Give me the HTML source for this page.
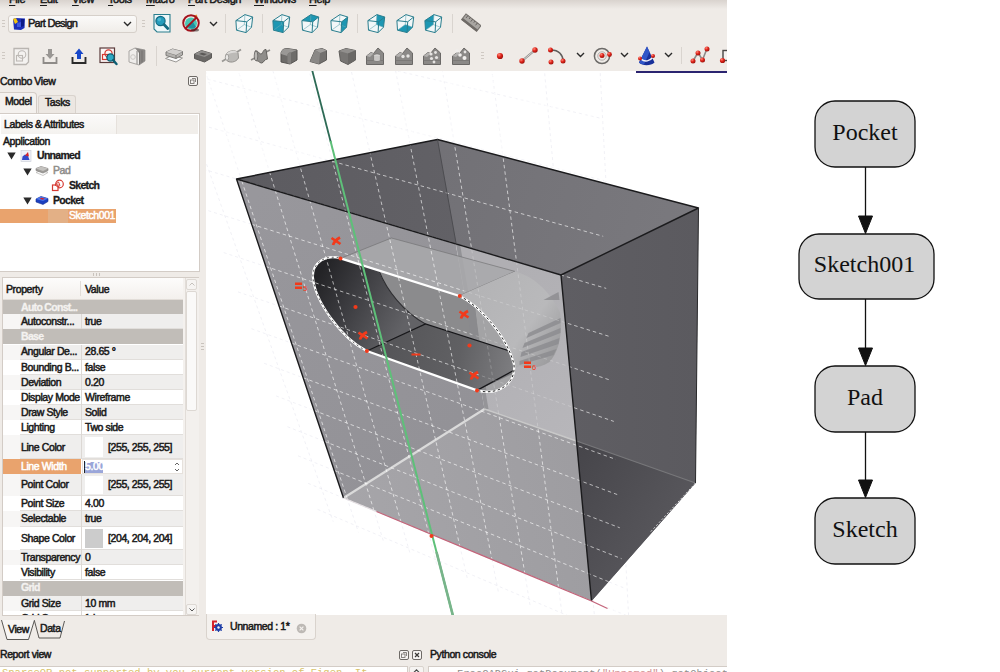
<!DOCTYPE html>
<html><head><meta charset="utf-8"><title>FreeCAD</title>
<style>
html,body{margin:0;padding:0;background:#fff;}
body{width:1000px;height:672px;position:relative;overflow:hidden;font-family:"Liberation Sans",sans-serif;font-size:10.5px;color:#1a1a1a;letter-spacing:-0.4px;-webkit-text-stroke:0.5px currentColor;}
.abs{position:absolute;}
#win{position:absolute;left:0;top:0;width:727px;height:672px;background:#efebe7;overflow:hidden;}
#topshade{position:absolute;left:0;top:0;width:727px;height:9px;background:linear-gradient(#d9d3ce,#efebe7);}
.menu span{position:absolute;top:-7.5px;font-size:11px;line-height:13px;white-space:nowrap;-webkit-text-stroke:0.5px currentColor}.menu u{text-decoration-thickness:1px;text-underline-offset:1.5px}
.t{position:absolute;white-space:nowrap;line-height:14px;height:14px;margin-top:-0.6px}
.b{font-weight:bold;-webkit-text-stroke:0.3px currentColor;letter-spacing:-0.7px;font-size:10.5px}
.sep{position:absolute;width:1px;background:#d9d4cf;}
.ico{position:absolute;}
</style></head><body>
<div id="win">
<div id="topshade"></div>
<div class="menu">
<span style="left:9px"><u>F</u>ile</span><span style="left:40px"><u>E</u>dit</span><span style="left:72px"><u>V</u>iew</span><span style="left:108px"><u>T</u>ools</span><span style="left:146px"><u>M</u>acro</span><span style="left:188px"><u>P</u>art Design</span><span style="left:254px"><u>W</u>indows</span><span style="left:309px"><u>H</u>elp</span>
</div>
<div class="abs" style="left:2px;top:20px;width:3px;height:7px;background:repeating-linear-gradient(#cfc9c3 0 1px,transparent 1px 3px)"></div>
<div class="abs" style="left:142px;top:20px;width:3px;height:7px;background:repeating-linear-gradient(#cfc9c3 0 1px,transparent 1px 3px)"></div>
<div class="abs" style="left:2px;top:52px;width:3px;height:7px;background:repeating-linear-gradient(#cfc9c3 0 1px,transparent 1px 3px)"></div>
<div class="abs" style="left:481px;top:52px;width:3px;height:7px;background:repeating-linear-gradient(#cfc9c3 0 1px,transparent 1px 3px)"></div>
<div class="abs" style="left:8px;top:15px;width:127px;height:16px;border:1px solid #d6d0ca;border-radius:3px;background:linear-gradient(#fbfaf9,#f0ede9)"></div>
<svg class="ico" style="left:12px;top:17px" width="14" height="14" viewBox="0 0 14 14"><path d="M1 2 L4 1 L13 1.5 L12.5 11 L9 13 L2 12.5 Z" fill="#1c2fb8"/><path d="M1 2 L4 1 L6 5 L3 7 Z" fill="#f1c40f"/><path d="M5 6 L9 5 L9 10 L5 10Z" fill="#3f57e0"/><path d="M9 2 L12 2 L12 9 L9 10 Z" fill="#0c1a86"/></svg>
<div class="t" style="left:28px;top:17px;font-size:11px;letter-spacing:-0.75px">Part Design</div>
<svg class="ico" style="left:123px;top:21px" width="9" height="6" viewBox="0 0 9 6"><path d="M1 1 L4.5 4.5 L8 1" fill="none" stroke="#2a2a2a" stroke-width="1.4"/></svg>
<svg class="ico" style="left:152px;top:13px" width="20" height="20" viewBox="0 0 20 20"><path d="M2 1.5 H18 V19 H5 L2 16 Z" fill="#eef7f9" stroke="#2a7e8e" stroke-width="1.1"/><circle cx="8.5" cy="8" r="4.6" fill="#259cbc" stroke="#136a82" stroke-width="1.2"/><circle cx="7.3" cy="6.6" r="1.8" fill="#5cc3da" opacity=".7"/><path d="M12 11.5 L15.8 15.5" stroke="#136a82" stroke-width="2.8" stroke-linecap="round"/></svg>
<svg class="ico" style="left:181px;top:13px" width="20" height="20" viewBox="0 0 20 20"><circle cx="10" cy="10.5" r="6" fill="#49c6b4"/><path d="M6 13 A6 6 0 0 0 15 14 L12 9 Z" fill="#1f8fa0"/><path d="M13 4 l3 -1.5" stroke="#e08a2a" stroke-width="2"/><circle cx="10" cy="10" r="7.8" fill="none" stroke="#a3121c" stroke-width="1.9"/><path d="M4.6 15.4 L15.4 4.6" stroke="#a3121c" stroke-width="1.9"/><ellipse cx="14" cy="17" rx="4" ry="1.5" fill="#3a2a2a" opacity=".6"/></svg>
<svg class="ico" style="left:209px;top:21px" width="9" height="6" viewBox="0 0 9 6"><path d="M1 1 L4.5 4.5 L8 1" fill="none" stroke="#2a2a2a" stroke-width="1.4"/></svg>
<div class="sep" style="left:225px;top:14px;height:19px"></div>
<svg class="ico" style="left:234.5px;top:14px" width="19" height="20" viewBox="0 0 19 20"><polygon points="0.9,6.6 9.9,0.6 17.7,3 16.5,13.2 11.1,18.6 1.5,16.2" fill="#f2f7f8"/><g fill="none" stroke="#2a7e8e" stroke-linejoin="round"><path d="M9.3 10.6 L9.9 0.6 M9.3 10.6 L1.5 16.2 M9.3 10.6 L16.5 13.2" stroke-width=".6" stroke="#6aa9b3"/><polygon points="0.9,6.6 9.9,0.6 17.7,3 16.5,13.2 11.1,18.6 1.5,16.2" stroke-width="1"/><path d="M0.9 6.6 L11.7 7.8 L17.7 3 M11.7 7.8 L11.1 18.6" stroke-width="1"/></g></svg>
<svg class="ico" style="left:272px;top:14px" width="19" height="20" viewBox="0 0 19 20"><polygon points="0.9,6.6 9.9,0.6 17.7,3 16.5,13.2 11.1,18.6 1.5,16.2" fill="#f2f7f8"/><polygon points="0.9,6.6 11.7,7.8 11.1,18.6 1.5,16.2" fill="#1d97b3"/><g fill="none" stroke="#2a7e8e" stroke-linejoin="round"><path d="M9.3 10.6 L9.9 0.6 M9.3 10.6 L1.5 16.2 M9.3 10.6 L16.5 13.2" stroke-width=".6" stroke="#6aa9b3"/><polygon points="0.9,6.6 9.9,0.6 17.7,3 16.5,13.2 11.1,18.6 1.5,16.2" stroke-width="1"/><path d="M0.9 6.6 L11.7 7.8 L17.7 3 M11.7 7.8 L11.1 18.6" stroke-width="1"/></g></svg>
<svg class="ico" style="left:300.5px;top:14px" width="19" height="20" viewBox="0 0 19 20"><polygon points="0.9,6.6 9.9,0.6 17.7,3 16.5,13.2 11.1,18.6 1.5,16.2" fill="#f2f7f8"/><polygon points="0.9,6.6 9.9,0.6 17.7,3 11.7,7.8" fill="#1d97b3"/><g fill="none" stroke="#2a7e8e" stroke-linejoin="round"><path d="M9.3 10.6 L9.9 0.6 M9.3 10.6 L1.5 16.2 M9.3 10.6 L16.5 13.2" stroke-width=".6" stroke="#6aa9b3"/><polygon points="0.9,6.6 9.9,0.6 17.7,3 16.5,13.2 11.1,18.6 1.5,16.2" stroke-width="1"/><path d="M0.9 6.6 L11.7 7.8 L17.7 3 M11.7 7.8 L11.1 18.6" stroke-width="1"/></g></svg>
<svg class="ico" style="left:329.5px;top:14px" width="19" height="20" viewBox="0 0 19 20"><polygon points="0.9,6.6 9.9,0.6 17.7,3 16.5,13.2 11.1,18.6 1.5,16.2" fill="#f2f7f8"/><polygon points="11.7,7.8 17.7,3 16.5,13.2 11.1,18.6" fill="#1d97b3"/><g fill="none" stroke="#2a7e8e" stroke-linejoin="round"><path d="M9.3 10.6 L9.9 0.6 M9.3 10.6 L1.5 16.2 M9.3 10.6 L16.5 13.2" stroke-width=".6" stroke="#6aa9b3"/><polygon points="0.9,6.6 9.9,0.6 17.7,3 16.5,13.2 11.1,18.6 1.5,16.2" stroke-width="1"/><path d="M0.9 6.6 L11.7 7.8 L17.7 3 M11.7 7.8 L11.1 18.6" stroke-width="1"/></g></svg>
<svg class="ico" style="left:366.5px;top:14px" width="19" height="20" viewBox="0 0 19 20"><polygon points="0.9,6.6 9.9,0.6 17.7,3 16.5,13.2 11.1,18.6 1.5,16.2" fill="#f2f7f8"/><polygon points="9.9,0.6 17.7,3 16.5,13.2 9.3,10.6" fill="#1d97b3"/><g fill="none" stroke="#2a7e8e" stroke-linejoin="round"><path d="M9.3 10.6 L9.9 0.6 M9.3 10.6 L1.5 16.2 M9.3 10.6 L16.5 13.2" stroke-width=".6" stroke="#6aa9b3"/><polygon points="0.9,6.6 9.9,0.6 17.7,3 16.5,13.2 11.1,18.6 1.5,16.2" stroke-width="1"/><path d="M0.9 6.6 L11.7 7.8 L17.7 3 M11.7 7.8 L11.1 18.6" stroke-width="1"/></g></svg>
<svg class="ico" style="left:395.5px;top:14px" width="19" height="20" viewBox="0 0 19 20"><polygon points="0.9,6.6 9.9,0.6 17.7,3 16.5,13.2 11.1,18.6 1.5,16.2" fill="#f2f7f8"/><polygon points="1.5,16.2 9.3,10.6 16.5,13.2 11.1,18.6" fill="#1d97b3"/><g fill="none" stroke="#2a7e8e" stroke-linejoin="round"><path d="M9.3 10.6 L9.9 0.6 M9.3 10.6 L1.5 16.2 M9.3 10.6 L16.5 13.2" stroke-width=".6" stroke="#6aa9b3"/><polygon points="0.9,6.6 9.9,0.6 17.7,3 16.5,13.2 11.1,18.6 1.5,16.2" stroke-width="1"/><path d="M0.9 6.6 L11.7 7.8 L17.7 3 M11.7 7.8 L11.1 18.6" stroke-width="1"/></g></svg>
<svg class="ico" style="left:424px;top:14px" width="19" height="20" viewBox="0 0 19 20"><polygon points="0.9,6.6 9.9,0.6 17.7,3 16.5,13.2 11.1,18.6 1.5,16.2" fill="#f2f7f8"/><polygon points="0.9,6.6 9.9,0.6 9.3,10.6 1.5,16.2" fill="#1d97b3"/><g fill="none" stroke="#2a7e8e" stroke-linejoin="round"><path d="M9.3 10.6 L9.9 0.6 M9.3 10.6 L1.5 16.2 M9.3 10.6 L16.5 13.2" stroke-width=".6" stroke="#6aa9b3"/><polygon points="0.9,6.6 9.9,0.6 17.7,3 16.5,13.2 11.1,18.6 1.5,16.2" stroke-width="1"/><path d="M0.9 6.6 L11.7 7.8 L17.7 3 M11.7 7.8 L11.1 18.6" stroke-width="1"/></g></svg>
<div class="sep" style="left:262px;top:14px;height:19px"></div>
<div class="sep" style="left:357px;top:14px;height:19px"></div>
<div class="sep" style="left:452px;top:14px;height:19px"></div>
<svg class="ico" style="left:461px;top:13px" width="20" height="20" viewBox="0 0 20 20"><g transform="rotate(38 10 10)"><rect x="0.5" y="6" width="19" height="7" fill="#a9a6a2" stroke="#77736f" stroke-width="1"/><rect x="0.5" y="11" width="19" height="2.4" fill="#6e6a66"/><path d="M3 6v3M6 6v2M9 6v3M12 6v2M15 6v3" stroke="#5a5652" stroke-width=".8"/></g></svg>
<div class="abs" style="left:0;top:1px">
<svg class="ico" style="left:11px;top:45px" width="20" height="20" viewBox="0 0 20 20"><path d="M3 2.5 H17.5 V16 L15 18.5 H3 Z" fill="#f4f2f0" stroke="#b9b5b1" stroke-width="1.3"/><circle cx="11" cy="8.5" r="3.8" fill="none" stroke="#bdb9b5" stroke-width="1.1"/><rect x="5.5" y="9.5" width="6" height="5.5" fill="none" stroke="#bdb9b5" stroke-width="1.1"/></svg>
<svg class="ico" style="left:40px;top:45px" width="20" height="20" viewBox="0 0 20 20"><path d="M3.5 11 V17 H16.5 V11" fill="none" stroke="#8e8b88" stroke-width="1.8"/><path d="M8 3 H12 V8 H14.5 L10 13 L5.5 8 H8 Z" fill="#9a9794"/></svg>
<svg class="ico" style="left:69px;top:45px" width="20" height="20" viewBox="0 0 20 20"><path d="M3.5 11 V17 H16.5 V11" fill="none" stroke="#2b2b2b" stroke-width="1.9"/><path d="M8 13 H12 V8 H14.5 L10 2.5 L5.5 8 H8 Z" fill="#1747c9"/></svg>
<svg class="ico" style="left:98px;top:45px" width="21" height="21" viewBox="0 0 21 21"><rect x="2" y="2" width="14.5" height="14.5" fill="#fbf6f5" stroke="#5a3a3a" stroke-width="1.2"/><circle cx="10.5" cy="7.5" r="3.6" fill="none" stroke="#d63a32" stroke-width="1.2"/><rect x="4.5" y="8.5" width="5" height="5" fill="none" stroke="#d63a32" stroke-width="1.2"/><circle cx="12.5" cy="11.5" r="3.6" fill="#2fa9c4" stroke="#0c5e73" stroke-width="1.3"/><path d="M15.2 14.2 L18.5 18" stroke="#0c5e73" stroke-width="2.4" stroke-linecap="round"/></svg>
<svg class="ico" style="left:126px;top:45px" width="21" height="21" viewBox="0 0 21 21"><path d="M3 5 L9 2 L19 4 V15 L13 19 L3 16 Z" fill="#efedeb" stroke="#a8a5a2" stroke-width="1"/><path d="M9 2 L19 4 V15 L13 19 V7 Z" fill="#8a8785"/><path d="M11 5 v13 M13.5 5.5 v13 M16 4.5 v12" stroke="#6f6d6b" stroke-width=".8"/><circle cx="7" cy="11" r="2.3" fill="none" stroke="#c9c6c3"/></svg>
<div class="sep" style="left:156px;top:45px;height:20px"></div>
<svg class="ico" style="left:164px;top:45px" width="20" height="20" viewBox="0 0 20 20"><path d="M1.5 12.5 L8 9.5 L18.5 12 L12 16 Z" fill="#fafafa" stroke="#9a9895" stroke-width="1"/><path d="M2 6 L8.5 3 L18.5 5.5 V9 L12 12.5 L2 9.5 Z" fill="#b4b2af" stroke="#7d7b78" stroke-width="1"/><path d="M2 6 L12 9 L18.5 5.5 M12 9 V12.5" fill="none" stroke="#7d7b78" stroke-width="1"/><path d="M2 6 L8.5 3 L18.5 5.5 L12 9 Z" fill="#d2d0ce"/></svg>
<svg class="ico" style="left:193px;top:46px" width="20" height="18" viewBox="0 0 20 18"><path d="M1.5 7 L8.5 3.5 L18.5 6.5 V11 L11.5 15 L1.5 11.5 Z" fill="#6a6866" stroke="#5b5957" stroke-width="1"/><path d="M1.5 7 L8.5 3.5 L18.5 6.5 L11.5 10 Z" fill="#8f8d8b"/><path d="M6 7 L9 5.7 L14 7 L11 8.5 Z" fill="#5b5957"/></svg>
<svg class="ico" style="left:221px;top:45px" width="21" height="20" viewBox="0 0 21 20"><path d="M1 15.5 L20 3.5" stroke="#9a9895" stroke-width="1.8"/><path d="M5 8.5 C7 4.5 14 3.5 17 6.5 L17.5 12 C15 16.5 8 17.5 5.5 14 Z" fill="#bcbab7" stroke="#8b8986" stroke-width=".9"/><path d="M5 8.5 C7 4.5 14 3.5 17 6.5 C13 6 8 7.5 5 8.5Z" fill="#dcdad8"/><ellipse cx="6" cy="11.3" rx="1.7" ry="3" fill="#e9e7e5" stroke="#8b8986" stroke-width=".7"/></svg>
<svg class="ico" style="left:250px;top:45px" width="21" height="21" viewBox="0 0 21 21"><path d="M1 14 L20 4" stroke="#8b8986" stroke-width="1.6"/><path d="M5 5 C8 4 9 8 11 8 C13 8 13 3 16 3.5 L17.5 13 C14 13 14 17 11.5 17 C9 17 9 14 6.5 15 Z" fill="#8f8d8a" stroke="#64625f" stroke-width="1"/><ellipse cx="6" cy="10" rx="1.8" ry="4.8" fill="#b9b7b4" stroke="#64625f" stroke-width=".8"/></svg>
<svg class="ico" style="left:279px;top:45px" width="20" height="20" viewBox="0 0 20 20"><path d="M2 8 C2 4 5 2.5 8 2.5 L18 4 V14 L11 18 L2 16 Z" fill="#6e6c6a" stroke="#555351" stroke-width="1"/><path d="M2 8 C2 4 5 2.5 8 2.5 L18 4 L12 6.5 C9 6.5 8.5 8 8.5 10 Z" fill="#9a9896"/><path d="M8.5 10 C8.5 8 9 6.5 12 6.5 V18 L8.5 17.2 Z" fill="#82807e"/></svg>
<svg class="ico" style="left:308px;top:45px" width="20" height="20" viewBox="0 0 20 20"><path d="M2 15.5 L7 4 L14 2.5 L18.5 4.5 V14 L11 18 Z" fill="#73716f" stroke="#5c5a58" stroke-width="1"/><path d="M7 4 L14 2.5 L18.5 4.5 L12 7 Z" fill="#a09e9c"/><path d="M2 15.5 L7 4 L12 7 L11 18 Z" fill="#8a8886"/></svg>
<svg class="ico" style="left:337px;top:45px" width="20" height="20" viewBox="0 0 20 20"><path d="M2 5 L9 2.5 L18.5 4.5 V14 L11 18.5 L3.5 15 Z" fill="#777573" stroke="#5f5d5b" stroke-width="1"/><path d="M2 5 L9 2.5 L18.5 4.5 L11 7.5 Z" fill="#918f8d"/><path d="M11 7.5 L18.5 4.5 V14 L11 18.5 Z" fill="#6a6866"/></svg>
<svg class="ico" style="left:364.5px;top:45px" width="20" height="20" viewBox="0 0 20 20"><path d="M1.5 18.5 V10 L6 6.5 L8.5 7.5 L13 2 L18.5 7 V18.5 Z" fill="#8b8987" stroke="#6a6866" stroke-width="1"/><path d="M1.5 10 L6 6.5 L8.5 7.5 L5 11 Z" fill="#b3b1af"/><path d="M1.5 14.5 H18.5" stroke="#777573" stroke-width=".8"/><ellipse cx="12" cy="9.5" rx="3.4" ry="1.6" fill="#dedcda" stroke="#6a6866" stroke-width=".6"/><path d="M8.6 9.5 V14 A3.4 1.6 0 0 0 15.4 14 V9.5" fill="#c9c7c5" stroke="#6a6866" stroke-width=".6"/></svg>
<svg class="ico" style="left:393.5px;top:45px" width="20" height="20" viewBox="0 0 20 20"><path d="M1.5 18.5 V10 L6 6.5 L8.5 7.5 L13 2 L18.5 7 V18.5 Z" fill="#8b8987" stroke="#6a6866" stroke-width="1"/><path d="M1.5 10 L6 6.5 L8.5 7.5 L5 11 Z" fill="#b3b1af"/><path d="M1.5 14.5 H18.5" stroke="#777573" stroke-width=".8"/><circle cx="9" cy="10.5" r="1.7" fill="#e6e4e2"/><circle cx="14" cy="10" r="1.7" fill="#e6e4e2"/></svg>
<svg class="ico" style="left:422px;top:45px" width="20" height="20" viewBox="0 0 20 20"><path d="M1.5 18.5 V10 L6 6.5 L8.5 7.5 L13 2 L18.5 7 V18.5 Z" fill="#8b8987" stroke="#6a6866" stroke-width="1"/><path d="M1.5 10 L6 6.5 L8.5 7.5 L5 11 Z" fill="#b3b1af"/><path d="M1.5 14.5 H18.5" stroke="#777573" stroke-width=".8"/><circle cx="9" cy="8" r="1.6" fill="#e6e4e2"/><circle cx="13.5" cy="6.5" r="1.4" fill="#e6e4e2"/><circle cx="9.5" cy="12.5" r="1.6" fill="#e6e4e2"/><circle cx="14.5" cy="11.5" r="1.6" fill="#e6e4e2"/><circle cx="12" cy="16" r="1.4" fill="#e6e4e2"/></svg>
<svg class="ico" style="left:451px;top:45px" width="20" height="20" viewBox="0 0 20 20"><path d="M1.5 18.5 V10 L6 6.5 L8.5 7.5 L13 2 L18.5 7 V18.5 Z" fill="#8b8987" stroke="#6a6866" stroke-width="1"/><path d="M1.5 10 L6 6.5 L8.5 7.5 L5 11 Z" fill="#b3b1af"/><path d="M1.5 14.5 H18.5" stroke="#777573" stroke-width=".8"/><circle cx="6" cy="5" r="1.8" fill="#f0eeec"/><circle cx="9" cy="9" r="1.8" fill="#f0eeec"/><circle cx="13.5" cy="12" r="2" fill="#f0eeec"/><circle cx="14" cy="6" r="1.4" fill="#e6e4e2"/></svg>
</div>
<svg width="0" height="0" style="position:absolute"><defs><radialGradient id="rb" cx=".35" cy=".3" r=".8"><stop offset="0" stop-color="#ff8a7a"/><stop offset=".45" stop-color="#e0241b"/><stop offset="1" stop-color="#8c0d08"/></radialGradient></defs></svg>
<svg class="ico" style="left:495px;top:51px" width="10" height="10" viewBox="0 0 10 10"><circle cx="5" cy="5" r="3.1" fill="url(#rb)"/></svg>
<svg class="ico" style="left:518px;top:46px" width="21" height="19" viewBox="0 0 21 19"><path d="M4 15 L17 4" stroke="#8c8a88" stroke-width="2.2"/><path d="M4 15 L17 4" stroke="#e8e6e4" stroke-width=".8"/><circle cx="4" cy="15" r="2.7" fill="url(#rb)"/><circle cx="17" cy="4" r="2.7" fill="url(#rb)"/></svg>
<svg class="ico" style="left:546px;top:46px" width="22" height="19" viewBox="0 0 22 19"><path d="M5 4 C13 4 17 9 17 15" fill="none" stroke="#5f5d5b" stroke-width="1.6"/><circle cx="4.5" cy="4" r="2.5" fill="url(#rb)"/><circle cx="17" cy="15" r="2.5" fill="url(#rb)"/><circle cx="5" cy="16" r="2.5" fill="url(#rb)"/></svg>
<svg class="ico" style="left:576px;top:52px" width="9" height="6" viewBox="0 0 9 6"><path d="M1 1 L4.5 4.5 L8 1" fill="none" stroke="#2a2a2a" stroke-width="1.4"/></svg>
<svg class="ico" style="left:592px;top:46px" width="21" height="20" viewBox="0 0 21 20"><circle cx="10" cy="10" r="7.6" fill="none" stroke="#6c6a68" stroke-width="1.5"/><circle cx="10" cy="10" r="4.2" fill="none" stroke="#b0aeac" stroke-width="1"/><circle cx="10" cy="9.5" r="2.5" fill="url(#rb)"/><circle cx="17.5" cy="8.5" r="2.4" fill="url(#rb)"/></svg>
<svg class="ico" style="left:620px;top:52px" width="9" height="6" viewBox="0 0 9 6"><path d="M1 1 L4.5 4.5 L8 1" fill="none" stroke="#2a2a2a" stroke-width="1.4"/></svg>
<svg class="ico" style="left:636px;top:45px" width="22" height="22" viewBox="0 0 22 22"><path d="M11 1.5 L18.5 17.5 C15 21 6 21 3 17.5 Z" fill="#18309a"/><path d="M11 1.5 L13.5 7 L8 19.5 C6 19 4 18.5 3 17.5 Z" fill="#2f55c8"/><path d="M5 14 C9 17.5 14 16 16.5 12.5" fill="none" stroke="#f2f2f8" stroke-width="1.5"/><circle cx="4" cy="13.5" r="2" fill="url(#rb)"/><circle cx="17" cy="11" r="2" fill="url(#rb)"/></svg>
<svg class="ico" style="left:664px;top:52px" width="9" height="6" viewBox="0 0 9 6"><path d="M1 1 L4.5 4.5 L8 1" fill="none" stroke="#2a2a2a" stroke-width="1.4"/></svg>
<div class="sep" style="left:681px;top:47px;height:17px"></div>
<svg class="ico" style="left:689px;top:45px" width="22" height="20" viewBox="0 0 22 20"><path d="M4 16 L9 7.5 L13.5 15 L18 3.5" fill="none" stroke="#8c8a88" stroke-width="1.6"/><circle cx="4" cy="16" r="2.5" fill="url(#rb)"/><circle cx="9" cy="8" r="2.5" fill="url(#rb)"/><circle cx="13.5" cy="15" r="2.5" fill="url(#rb)"/><circle cx="18" cy="4" r="2.5" fill="url(#rb)"/></svg>
<svg class="ico" style="left:718px;top:45px" width="9" height="20" viewBox="0 0 9 20"><rect x="5" y="5.5" width="9" height="10" fill="#f4f2f0" stroke="#4a4846" stroke-width="1.4"/><circle cx="4.5" cy="15.5" r="2.6" fill="url(#rb)"/></svg>
<div class="t" style="left:0px;top:74.8px">Combo View</div>
<svg class="ico" style="left:188px;top:76px" width="10" height="10" viewBox="0 0 10 10"><rect x=".5" y=".5" width="9" height="9" rx="1.5" fill="#f6f4f2" stroke="#6e6a66"/><rect x="2.5" y="4" width="3.5" height="3.5" fill="none" stroke="#6e6a66" stroke-width=".8"/><path d="M4 2.5 H7.5 V6" fill="none" stroke="#6e6a66" stroke-width=".8"/></svg>
<div class="abs" style="left:38px;top:95px;width:36px;height:18px;border:1px solid #d9d3cd;border-bottom:none;border-radius:3px 3px 0 0;background:#ece7e2"></div>
<div class="abs" style="left:0px;top:92px;width:36px;height:22px;border:1px solid #d3ccc6;border-left:none;border-bottom:none;border-radius:0 4px 0 0;background:#f4f1ee"></div>
<div class="t" style="left:5px;top:95px">Model</div>
<div class="t" style="left:45px;top:96px">Tasks</div>
<div class="abs" style="left:0;top:113px;width:199.5px;height:159px;border:1px solid #d3ccc6;border-left:none;background:#fff;box-sizing:border-box"></div>
<div class="abs" style="left:1px;top:115px;width:197px;height:19px;background:#f1eeea"></div>
<div class="abs" style="left:1px;top:115px;width:116px;height:19px;background:linear-gradient(#fbfaf9,#f4f2ef);border-right:1px solid #e6e1dc;box-sizing:border-box"></div>
<div class="t" style="left:4px;top:118px">Labels &amp; Attributes</div>
<div class="t" style="left:3px;top:134.5px">Application</div>
<svg class="ico" style="left:7px;top:152px" width="9" height="8" viewBox="0 0 9 8"><path d="M0.3 0.5 H8.7 L4.5 7.6 Z" fill="#2b2b2b"/></svg>
<svg class="ico" style="left:23px;top:167.5px" width="9" height="8" viewBox="0 0 9 8"><path d="M0.3 0.5 H8.7 L4.5 7.6 Z" fill="#2b2b2b"/></svg>
<svg class="ico" style="left:23px;top:197px" width="9" height="8" viewBox="0 0 9 8"><path d="M0.3 0.5 H8.7 L4.5 7.6 Z" fill="#2b2b2b"/></svg>
<svg class="ico" style="left:20px;top:150px" width="12" height="12" viewBox="0 0 12 12"><rect x="1" y=".5" width="10" height="11" fill="#eef0f8" stroke="#c9cbd6" stroke-width=".6"/><path d="M2 10 L2.5 6.5 L5 4.5 L8 6 L9.5 10 Z" fill="#3348c9"/><path d="M5 5.5 L8 2 L9 6.5 Z" fill="#d4222a"/></svg>
<svg class="ico" style="left:35px;top:165px" width="14" height="12" viewBox="0 0 14 12"><path d="M1 7.5 L6 5.5 L13 7.5 L8 10.5 Z" fill="#fafafa" stroke="#b5b3b0" stroke-width=".7"/><path d="M1 3.5 L6 1.5 L13 3.5 V5.5 L8 8 L1 5.5 Z" fill="#9d9b98" stroke="#858380" stroke-width=".7"/><path d="M1 3.5 L6 1.5 L13 3.5 L8 6 Z" fill="#c4c2bf"/></svg>
<svg class="ico" style="left:51px;top:179px" width="14" height="13" viewBox="0 0 14 13"><circle cx="8.5" cy="5" r="3.8" fill="#fff" stroke="#d63a32" stroke-width="1.2"/><rect x="1.5" y="6" width="5.5" height="5.5" fill="#fff" stroke="#d63a32" stroke-width="1.2"/><path d="M4 6 L7.5 3 L9 6.5 L7 8 Z" fill="none" stroke="#d63a32" stroke-width="1"/></svg>
<svg class="ico" style="left:35px;top:194px" width="14" height="12" viewBox="0 0 14 12"><path d="M1 5 L6 2.5 L13 4.5 V7.5 L8 10.5 L1 8 Z" fill="#1b3fbf" stroke="#16308f" stroke-width=".6"/><path d="M1 5 L6 2.5 L13 4.5 L8 7 Z" fill="#4a74ea"/><path d="M4.5 4.8 L6.8 3.8 L10 4.7 L7.7 5.8 Z" fill="#d4222a"/></svg>
<div class="t b" style="left:37px;top:149px">Unnamed</div>
<div class="t" style="left:53px;top:164px;color:#8f8d8a">Pad</div>
<div class="t b" style="left:69px;top:178.5px">Sketch</div>
<div class="t b" style="left:53px;top:193.5px">Pocket</div>
<div class="abs" style="left:0;top:208.5px;width:116px;height:14px;background:#e9a36d"></div>
<div class="abs" style="left:48px;top:208.5px;width:20px;height:14px;background:#e3b086"></div>
<div class="t" style="left:69px;top:208.5px;color:#fff">Sketch001</div>
<div class="abs" style="left:93px;top:273px;width:9px;height:3px;background:repeating-linear-gradient(90deg,#c9c3bd 0 1px,transparent 1px 3px)"></div>
<div class="abs" style="left:2px;top:277px;width:196.5px;height:339px;border:1px solid #d3ccc6;background:#f4f1ee;box-sizing:border-box"></div>
<div class="abs" style="left:3px;top:277.5px;width:180px;height:337.5px;background:#fff;overflow:hidden" id="prop">
<div class="abs" style="left:0;top:0;width:180px;height:22px;background:linear-gradient(#fdfcfb,#f3f0ed);border-bottom:1px solid #e2ddd8;box-sizing:border-box"></div>
<div class="abs" style="left:77px;top:3px;width:1px;height:15px;background:#e2ddd8"></div>
<div class="t" style="left:3px;top:5px">Property</div><div class="t" style="left:82px;top:5px">Value</div>
<div class="abs" style="left:0;top:22.5px;width:180px;height:14.2px;background:#c1bdb8"></div>
<div class="t b" style="left:18px;top:22.6px;color:#f4f2f0">Auto  Const...</div>
<div class="abs" style="left:0;top:36.7px;width:180px;height:15.15px;background:#efeeed;border-bottom:1px solid #e1dedb;box-sizing:border-box"></div>
<div class="abs" style="left:0;top:36.7px;width:17px;height:15.15px;background:#f7f6f5"></div>
<div class="abs" style="left:78px;top:36.7px;width:1px;height:15.15px;background:#dcd8d4"></div>
<div class="t" style="left:18px;top:37.275000000000006px">Autoconstr...</div>
<div class="t" style="left:82px;top:37.275000000000006px">true</div>
<div class="abs" style="left:0;top:51.85px;width:180px;height:15.15px;background:#c1bdb8"></div>
<div class="t b" style="left:18px;top:52.425000000000004px;color:#f4f2f0">Base</div>
<div class="abs" style="left:0;top:67.0px;width:180px;height:15.15px;background:#efeeed;border-bottom:1px solid #e1dedb;box-sizing:border-box"></div>
<div class="abs" style="left:0;top:67.0px;width:17px;height:15.15px;background:#f7f6f5"></div>
<div class="abs" style="left:78px;top:67.0px;width:1px;height:15.15px;background:#dcd8d4"></div>
<div class="t" style="left:18px;top:67.575px">Angular De...</div>
<div class="t" style="left:82px;top:67.575px">28.65 °</div>
<div class="abs" style="left:0;top:82.15px;width:180px;height:15.15px;background:#ffffff;border-bottom:1px solid #e1dedb;box-sizing:border-box"></div>
<div class="abs" style="left:0;top:82.15px;width:17px;height:15.15px;background:#ffffff"></div>
<div class="abs" style="left:78px;top:82.15px;width:1px;height:15.15px;background:#dcd8d4"></div>
<div class="t" style="left:18px;top:82.72500000000001px">Bounding B...</div>
<div class="t" style="left:82px;top:82.72500000000001px">false</div>
<div class="abs" style="left:0;top:97.30000000000001px;width:180px;height:15.15px;background:#efeeed;border-bottom:1px solid #e1dedb;box-sizing:border-box"></div>
<div class="abs" style="left:0;top:97.30000000000001px;width:17px;height:15.15px;background:#f7f6f5"></div>
<div class="abs" style="left:78px;top:97.30000000000001px;width:1px;height:15.15px;background:#dcd8d4"></div>
<div class="t" style="left:18px;top:97.87500000000001px">Deviation</div>
<div class="t" style="left:82px;top:97.87500000000001px">0.20</div>
<div class="abs" style="left:0;top:112.45000000000002px;width:180px;height:15.15px;background:#ffffff;border-bottom:1px solid #e1dedb;box-sizing:border-box"></div>
<div class="abs" style="left:0;top:112.45000000000002px;width:17px;height:15.15px;background:#ffffff"></div>
<div class="abs" style="left:78px;top:112.45000000000002px;width:1px;height:15.15px;background:#dcd8d4"></div>
<div class="t" style="left:18px;top:113.02500000000002px">Display Mode</div>
<div class="t" style="left:82px;top:113.02500000000002px">Wireframe</div>
<div class="abs" style="left:0;top:127.60000000000002px;width:180px;height:15.15px;background:#efeeed;border-bottom:1px solid #e1dedb;box-sizing:border-box"></div>
<div class="abs" style="left:0;top:127.60000000000002px;width:17px;height:15.15px;background:#f7f6f5"></div>
<div class="abs" style="left:78px;top:127.60000000000002px;width:1px;height:15.15px;background:#dcd8d4"></div>
<div class="t" style="left:18px;top:128.175px">Draw Style</div>
<div class="t" style="left:82px;top:128.175px">Solid</div>
<div class="abs" style="left:0;top:142.75000000000003px;width:180px;height:15.15px;background:#ffffff;border-bottom:1px solid #e1dedb;box-sizing:border-box"></div>
<div class="abs" style="left:0;top:142.75000000000003px;width:17px;height:15.15px;background:#ffffff"></div>
<div class="abs" style="left:78px;top:142.75000000000003px;width:1px;height:15.15px;background:#dcd8d4"></div>
<div class="t" style="left:18px;top:143.32500000000002px">Lighting</div>
<div class="t" style="left:82px;top:143.32500000000002px">Two side</div>
<div class="abs" style="left:0;top:157.90000000000003px;width:180px;height:23.6px;background:#efeeed;border-bottom:1px solid #e1dedb;box-sizing:border-box"></div>
<div class="abs" style="left:0;top:157.90000000000003px;width:17px;height:23.6px;background:#f7f6f5"></div>
<div class="abs" style="left:78px;top:157.90000000000003px;width:1px;height:23.6px;background:#dcd8d4"></div>
<div class="t" style="left:18px;top:162.70000000000005px">Line Color</div>
<div class="abs" style="left:82px;top:159.90000000000003px;width:18px;height:19.6px;background:#ffffff"></div>
<div class="t" style="left:105px;top:162.70000000000005px">[255, 255, 255]</div>
<div class="abs" style="left:0;top:181.50000000000003px;width:78px;height:14.5px;background:#e9a36d"></div>
<div class="t" style="left:18px;top:181.75000000000003px;color:#fff">Line Width</div>
<div class="abs" style="left:79px;top:181.50000000000003px;width:101px;height:14.5px;background:#fff;border:1px solid #e6e1dc;box-sizing:border-box"></div>
<div class="abs" style="left:81px;top:184.00000000000003px;width:19px;height:11px;background:#9aa6d9"></div>
<div class="abs" style="left:81px;top:183.50000000000003px;width:1px;height:12px;background:#222"></div>
<div class="t" style="left:82px;top:181.75000000000003px;color:#fff">5.00</div>
<svg class="ico" style="left:171px;top:183.50000000000003px" width="6" height="12" viewBox="0 0 6 12"><path d="M1 4 L3 2 L5 4 M1 8 L3 10 L5 8" fill="none" stroke="#555" stroke-width=".9"/></svg>
<div class="abs" style="left:0;top:196.00000000000003px;width:180px;height:22.8px;background:#efeeed;border-bottom:1px solid #e1dedb;box-sizing:border-box"></div>
<div class="abs" style="left:0;top:196.00000000000003px;width:17px;height:22.8px;background:#f7f6f5"></div>
<div class="abs" style="left:78px;top:196.00000000000003px;width:1px;height:22.8px;background:#dcd8d4"></div>
<div class="t" style="left:18px;top:200.40000000000003px">Point Color</div>
<div class="abs" style="left:82px;top:198.00000000000003px;width:18px;height:18.8px;background:#ffffff"></div>
<div class="t" style="left:105px;top:200.40000000000003px">[255, 255, 255]</div>
<div class="abs" style="left:0;top:218.80000000000004px;width:180px;height:15.15px;background:#ffffff;border-bottom:1px solid #e1dedb;box-sizing:border-box"></div>
<div class="abs" style="left:0;top:218.80000000000004px;width:17px;height:15.15px;background:#ffffff"></div>
<div class="abs" style="left:78px;top:218.80000000000004px;width:1px;height:15.15px;background:#dcd8d4"></div>
<div class="t" style="left:18px;top:219.37500000000003px">Point Size</div>
<div class="t" style="left:82px;top:219.37500000000003px">4.00</div>
<div class="abs" style="left:0;top:233.95000000000005px;width:180px;height:15.15px;background:#efeeed;border-bottom:1px solid #e1dedb;box-sizing:border-box"></div>
<div class="abs" style="left:0;top:233.95000000000005px;width:17px;height:15.15px;background:#f7f6f5"></div>
<div class="abs" style="left:78px;top:233.95000000000005px;width:1px;height:15.15px;background:#dcd8d4"></div>
<div class="t" style="left:18px;top:234.52500000000003px">Selectable</div>
<div class="t" style="left:82px;top:234.52500000000003px">true</div>
<div class="abs" style="left:0;top:249.10000000000005px;width:180px;height:23.6px;background:#ffffff;border-bottom:1px solid #e1dedb;box-sizing:border-box"></div>
<div class="abs" style="left:0;top:249.10000000000005px;width:17px;height:23.6px;background:#ffffff"></div>
<div class="abs" style="left:78px;top:249.10000000000005px;width:1px;height:23.6px;background:#dcd8d4"></div>
<div class="t" style="left:18px;top:253.90000000000006px">Shape Color</div>
<div class="abs" style="left:82px;top:251.10000000000005px;width:18px;height:19.6px;background:#cccccc"></div>
<div class="t" style="left:105px;top:253.90000000000006px">[204, 204, 204]</div>
<div class="abs" style="left:0;top:272.70000000000005px;width:180px;height:15.15px;background:#efeeed;border-bottom:1px solid #e1dedb;box-sizing:border-box"></div>
<div class="abs" style="left:0;top:272.70000000000005px;width:17px;height:15.15px;background:#f7f6f5"></div>
<div class="abs" style="left:78px;top:272.70000000000005px;width:1px;height:15.15px;background:#dcd8d4"></div>
<div class="t" style="left:18px;top:273.27500000000003px">Transparency</div>
<div class="t" style="left:82px;top:273.27500000000003px">0</div>
<div class="abs" style="left:0;top:287.85px;width:180px;height:15.15px;background:#ffffff;border-bottom:1px solid #e1dedb;box-sizing:border-box"></div>
<div class="abs" style="left:0;top:287.85px;width:17px;height:15.15px;background:#ffffff"></div>
<div class="abs" style="left:78px;top:287.85px;width:1px;height:15.15px;background:#dcd8d4"></div>
<div class="t" style="left:18px;top:288.425px">Visibility</div>
<div class="t" style="left:82px;top:288.425px">false</div>
<div class="abs" style="left:0;top:303.0px;width:180px;height:15.15px;background:#c1bdb8"></div>
<div class="t b" style="left:18px;top:303.575px;color:#f4f2f0">Grid</div>
<div class="abs" style="left:0;top:318.15px;width:180px;height:15.15px;background:#efeeed;border-bottom:1px solid #e1dedb;box-sizing:border-box"></div>
<div class="abs" style="left:0;top:318.15px;width:17px;height:15.15px;background:#f7f6f5"></div>
<div class="abs" style="left:78px;top:318.15px;width:1px;height:15.15px;background:#dcd8d4"></div>
<div class="t" style="left:18px;top:318.72499999999997px">Grid Size</div>
<div class="t" style="left:82px;top:318.72499999999997px">10 mm</div>
<div class="abs" style="left:0;top:333.29999999999995px;width:180px;height:15.15px;background:#ffffff;border-bottom:1px solid #e1dedb;box-sizing:border-box"></div>
<div class="abs" style="left:0;top:333.29999999999995px;width:17px;height:15.15px;background:#ffffff"></div>
<div class="abs" style="left:78px;top:333.29999999999995px;width:1px;height:15.15px;background:#dcd8d4"></div>
<div class="t" style="left:18px;top:333.87499999999994px">Grid Snap</div>
<div class="t" style="left:82px;top:333.87499999999994px">false</div>
</div>
<div class="abs" style="left:185px;top:278px;width:12.5px;height:337px;background:#f3f0ed;border-left:1px solid #e2ddd8"></div>
<div class="abs" style="left:186px;top:279px;width:11px;height:11px;background:#f6f4f2;border:1px solid #ddd8d3;box-sizing:border-box;border-radius:2px"></div>
<svg class="ico" style="left:188.5px;top:282px" width="6" height="4" viewBox="0 0 6 4"><path d="M.5 3.5 L3 1 L5.5 3.5" fill="none" stroke="#c0bbb6" stroke-width=".9"/></svg>
<div class="abs" style="left:186px;top:291px;width:11px;height:120px;background:#faf9f8;border:1px solid #ddd8d3;box-sizing:border-box;border-radius:2px"></div>
<div class="abs" style="left:186px;top:604px;width:11px;height:11px;background:#f6f4f2;border:1px solid #ddd8d3;box-sizing:border-box;border-radius:2px"></div>
<svg class="ico" style="left:188.5px;top:608px" width="6" height="4" viewBox="0 0 6 4"><path d="M.5 .5 L3 3 L5.5 .5" fill="none" stroke="#444" stroke-width=".9"/></svg>
<svg class="ico" style="left:0;top:618.5px" width="70" height="24" viewBox="0 0 70 24"><path d="M34.5 2 L39 19 H60 L64.5 2" fill="#efebe7" stroke="#4a4744" stroke-width=".9"/><path d="M1.5 1 L7 20.5 H28.5 L34.5 1" fill="#f7f5f3" stroke="#4a4744" stroke-width=".9"/></svg>
<div class="t" style="left:8px;top:622.5px">View</div><div class="t" style="left:40px;top:621.5px">Data</div>
<div class="abs" style="left:201px;top:343px;width:3px;height:9px;background:repeating-linear-gradient(#c9c3bd 0 1px,transparent 1px 3px)"></div>
<div class="abs" style="left:635.5px;top:71.2px;width:91.5px;height:2.2px;background:#2b2470;z-index:5"></div><div class="abs" style="left:205.5px;top:71px;width:521.5px;height:543.5px;background:#fff;overflow:hidden"><svg id="v3d" width="522" height="544" viewBox="205.5 71 522 544">
<defs>
<linearGradient id="gTop" gradientUnits="userSpaceOnUse" x1="236" y1="178" x2="460" y2="200"><stop offset="0" stop-color="#5c5b60"/><stop offset="1" stop-color="#626166"/></linearGradient>
<linearGradient id="gTopR" gradientUnits="userSpaceOnUse" x1="440" y1="150" x2="698" y2="230"><stop offset="0" stop-color="#727176"/><stop offset="1" stop-color="#7a797e"/></linearGradient>
<linearGradient id="gRight" gradientUnits="userSpaceOnUse" x1="560" y1="300" x2="700" y2="300"><stop offset="0" stop-color="#5f5e63"/><stop offset="1" stop-color="#5b5a5f"/></linearGradient>
<linearGradient id="gRightLo" gradientUnits="userSpaceOnUse" x1="580" y1="450" x2="690" y2="520"><stop offset="0" stop-color="#47464b"/><stop offset="1" stop-color="#59585d"/></linearGradient>
<linearGradient id="gLeft" gradientUnits="userSpaceOnUse" x1="250" y1="200" x2="460" y2="420"><stop offset="0" stop-color="#98979c"/><stop offset="1" stop-color="#939297"/></linearGradient>
<linearGradient id="gBot" gradientUnits="userSpaceOnUse" x1="350" y1="500" x2="600" y2="450"><stop offset="0" stop-color="#a6a5a9"/><stop offset="1" stop-color="#9d9ca0"/></linearGradient>
<linearGradient id="gBack" gradientUnits="userSpaceOnUse" x1="480" y1="300" x2="590" y2="420"><stop offset="0" stop-color="#b0afb3"/><stop offset="1" stop-color="#b7b6ba"/></linearGradient>
<linearGradient id="gCyl" gradientUnits="userSpaceOnUse" x1="318" y1="275" x2="405" y2="322"><stop offset="0" stop-color="#232326"/><stop offset="0.4" stop-color="#3c3c40"/><stop offset="0.8" stop-color="#56565a"/><stop offset="1" stop-color="#626266"/></linearGradient>
<linearGradient id="gFloor" gradientUnits="userSpaceOnUse" x1="380" y1="340" x2="510" y2="370"><stop offset="0" stop-color="#545457"/><stop offset="0.6" stop-color="#606063"/><stop offset="1" stop-color="#7c7c7f"/></linearGradient>
<linearGradient id="gWallR" gradientUnits="userSpaceOnUse" x1="480" y1="290" x2="560" y2="350"><stop offset="0" stop-color="#b4b4b6"/><stop offset="0.6" stop-color="#b9b9bb"/><stop offset="1" stop-color="#9c9c9e"/></linearGradient>
<clipPath id="cpocket"><path d="M340,258.4 L459,296 C478,305 506,335 513.4,364 C516,384 497,396 476.5,390.4 L366.4,351 C340,338 314,300 312.4,277 C312,262 326,254 340,258.4 Z"/></clipPath>
<clipPath id="cview"><rect x="205" y="71" width="523" height="545"/></clipPath>
<clipPath id="cR"><polygon points="455.5,243.5 560.5,275 576,441 484,409"/></clipPath>
<clipPath id="cNotR"><path clip-rule="evenodd" d="M205 71 H728 V616 H205 Z M455.5,243.5 L560.5,275 L576,441 L484,409 Z"/></clipPath>
</defs>
<rect x="205" y="71" width="523" height="545" fill="#fff"/>
<path d="M119.9 -79.0 L332.7 521.6 M157.4 -71.8 L357.9 532.3 M196.2 -64.3 L383.6 543.3 M236.3 -56.5 L409.8 554.5 M277.9 -48.5 L436.6 565.9 M325.6 -39.2 L466.9 578.8 M375.3 -29.6 L497.9 592.1 M427.1 -19.6 L529.6 605.6 M481.1 -9.2 L562.2 619.5 M537.6 1.7 L595.6 633.8 M596.6 13.2 L629.8 648.4 M112.2 -50.6 L596.7 49.7 M134.3 9.9 L600.4 118.3 M154.8 65.8 L603.7 180.6 M173.8 117.6 L606.7 237.4 M191.4 165.8 L609.5 289.5 M207.8 210.7 L612.1 337.4 M223.2 252.6 L614.5 381.7 M237.5 291.9 L616.7 422.6 M251.0 328.7 L618.7 460.6 M263.7 363.3 L620.6 496.0 M275.6 395.9 L622.4 529.0 M286.9 426.7 L624.0 559.8 M297.5 455.8 L625.6 588.8 M307.6 483.3 L627.0 616.0 M317.1 509.4 L628.4 641.6" fill="none" stroke="#d4d4e2" stroke-width="1" stroke-dasharray="3 3" opacity="0.32" clip-path="url(#cview)"/>
<polygon points="437.0,139.5 698.0,208.0 695.0,483.0 484.0,409.0" fill="url(#gBack)"/>
<polygon points="236.0,179.0 437.0,139.5 484.0,409.0 343.0,498.0" fill="url(#gLeft)"/>
<polygon points="343.0,498.0 484.0,409.0 695.0,483.0 591.0,601.0" fill="url(#gBot)"/>
<polygon points="560.5,275.0 698.0,208.0 695.0,483.0 591.0,601.0" fill="url(#gRight)"/>
<polygon points="576.0,441.0 695.0,483.0 591.0,601.0" fill="url(#gRightLo)"/>
<polygon points="236.0,179.0 437.0,139.5 698.0,208.0 560.5,275.0" fill="url(#gTopR)"/>
<polygon points="236.0,179.0 437.0,139.5 455.5,243.0" fill="url(#gTop)"/>
<polygon points="455.5,243.0 459.5,244.2 488.0,409.0 484.0,409.0" fill="#7c7c7f" opacity=".55"/>
<polyline points="343.0,498.0 484.0,409.0" stroke="#dadada" stroke-width="2.2" fill="none"/>
<polyline points="484.0,409.0 576.0,441.0" stroke="#c8c8c8" stroke-width="1.4" fill="none"/>
<polyline points="576.0,441.0 695.0,483.0" stroke="#77777a" stroke-width="1.2" fill="none"/>
<polygon points="340.0,258.4 391.0,238.0 514.5,271.4 459.5,295.5" fill="#a9a9ab" opacity=".85"/>
<polyline points="340.0,258.4 391.0,238.0 514.5,271.4 459.5,295.5" fill="none" stroke="#6f6f72" stroke-width=".8" opacity=".8"/>
<path d="M459.5,295.5 L514.5,271.4 C533,276 549,291 559.5,312 C562,330 560,350 549,362 C540,368 530,369 519,366 L476.5,390.4 C497,396 516,384 513.4,364 C506,335 478,305 459.5,295.5 Z" fill="url(#gWallR)"/>
<path d="M543,300 L558,292 L559,300 Z M528,333 L560,318 L560,323 L526,338 Z M524,343 L560,328 L560,333 L522,348 Z M521,352 L559,338 L558,344 L520,357 Z M519,361 L556,349 L553,355 L519,365 Z" fill="#8b8b8e" opacity=".8"/>
<g clip-path="url(#cpocket)">
<rect x="300" y="240" width="230" height="170" fill="#8b8b8d"/>
<polygon points="465.0,240.0 540.0,240.0 540.0,420.0 490.0,420.0" fill="#a3a3a5"/>
<polygon points="465.0,290.0 473.0,290.0 484.0,400.0 476.0,400.0" fill="#8a8a8d"/>
<polygon points="366.4,351.0 425.0,324.0 514.0,352.5 516.0,372.0 476.5,390.4" fill="url(#gFloor)"/>
<path d="M300,240 L378.6,240 L378.6,272 C386,290 403,312 425,324 L366.4,351 L300,420 Z" fill="url(#gCyl)"/>
<path d="M378.6,271 C386,290 403,312 425,324" fill="none" stroke="#2e2e31" stroke-width="1.1"/>
<polyline points="366.4,351.0 425.0,324.0 514.0,352.5" fill="none" stroke="#17171a" stroke-width="1.2"/>
<polyline points="476.5,390.4 514.0,370.0" fill="none" stroke="#17171a" stroke-width="1.2"/>
</g>
<path d="M157.4 -71.8 L347.1 499.7 M196.2 -64.3 L373.5 510.7 M236.3 -56.5 L400.5 521.9 M277.9 -48.5 L428.2 533.4 M325.6 -39.2 L459.4 546.4 M375.3 -29.6 L491.5 559.7 M427.1 -19.6 L524.3 573.3 M481.1 -9.2 L558.0 587.3 M162.5 -40.2 L592.1 48.8 M183.1 21.2 L596.0 117.2 M202.1 77.9 L599.5 179.5 M219.7 130.3 L602.7 236.3 M236.0 179.0 L605.7 288.4 M251.2 224.3 L608.4 336.3 M265.4 266.5 L610.9 380.5 M278.6 306.0 L613.3 421.4 M291.0 343.1 L615.4 459.4 M302.7 377.8 L617.4 494.8 M313.7 410.5 L619.3 527.8 M324.0 441.4 L621.1 558.7 M333.8 470.5 L622.7 587.6 M343.0 498.0 L624.2 614.8" fill="none" stroke="#ffffff" stroke-width="1" stroke-dasharray="3.5 3" opacity="0.62" clip-path="url(#cNotR)"/>
<path d="M157.4 -71.8 L347.1 499.7 M196.2 -64.3 L373.5 510.7 M236.3 -56.5 L400.5 521.9 M277.9 -48.5 L428.2 533.4 M325.6 -39.2 L459.4 546.4 M375.3 -29.6 L491.5 559.7 M427.1 -19.6 L524.3 573.3 M481.1 -9.2 L558.0 587.3 M162.5 -40.2 L592.1 48.8 M183.1 21.2 L596.0 117.2 M202.1 77.9 L599.5 179.5 M219.7 130.3 L602.7 236.3 M236.0 179.0 L605.7 288.4 M251.2 224.3 L608.4 336.3 M265.4 266.5 L610.9 380.5 M278.6 306.0 L613.3 421.4 M291.0 343.1 L615.4 459.4 M302.7 377.8 L617.4 494.8 M313.7 410.5 L619.3 527.8 M324.0 441.4 L621.1 558.7 M333.8 470.5 L622.7 587.6 M343.0 498.0 L624.2 614.8" fill="none" stroke="#ffffff" stroke-width="1" stroke-dasharray="3.5 3" opacity="0.22" clip-path="url(#cR)"/>
<polyline points="343.0,498.0 236.0,179.0 560.5,275.0 698.0,208.0 437.0,139.5 236.0,179.0" stroke="#1b1b1d" stroke-width="1.4" fill="none" stroke-linejoin="round"/>
<polyline points="560.5,275.0 591.0,601.0" stroke="#1b1b1d" stroke-width="1.4" fill="none"/>
<polyline points="698.0,208.0 695.0,483.0" stroke="#2a2a2c" stroke-width="1" fill="none"/>
<polyline points="437.0,139.5 455.5,243.0" stroke="#4c4c50" stroke-width="1" fill="none"/>
<polyline points="343.0,498.0 376.0,511.5" stroke="#e4dfe2" stroke-width="1.2" fill="none"/>
<polyline points="376.0,511.5 591.0,601.0 607.0,608.5" stroke="#c4647a" stroke-width="1.3" fill="none"/>
<polyline points="695.0,483.0 650.0,532.0" stroke="#d6d6d8" stroke-width="1" fill="none" stroke-dasharray="2 2"/>
<path d="M340,258.4 L459,296 C478,305 506,335 513.4,364 C516,384 497,396 476.5,390.4 L366.4,351 C340,338 314,300 312.4,277 C312,262 326,254 340,258.4 Z" fill="none" stroke="#ffffff" stroke-width="2.2"/>
<path d="M459,296 C478,305 506,335 513.4,364 C516,384 497,396 476.5,390.4" fill="none" stroke="#222" stroke-width="1" stroke-dasharray="2.5 2.5"/>
<path d="M366.4,351 C340,338 314,300 312.4,277 C312,262 326,254 340,258.4" fill="none" stroke="#444" stroke-width=".9" stroke-dasharray="2 3"/>
<path d="M311.6,70 L330.5,143" stroke="#2d6a55" stroke-width="1.8" fill="none"/>
<path d="M330,141 L452.5,616" stroke="#5ec079" stroke-width="2" fill="none"/>
<path d="M436,552 L452.5,616" stroke="#78b48a" stroke-width="2.6" fill="none"/>
<circle cx="340" cy="258.6" r="2" fill="#f23a1b"/>
<circle cx="366.4" cy="351" r="2" fill="#f23a1b"/>
<circle cx="459.3" cy="296" r="2" fill="#f23a1b"/>
<circle cx="476.5" cy="390.4" r="2" fill="#f23a1b"/>
<circle cx="355" cy="307" r="2.1" fill="#f23a1b"/>
<circle cx="469" cy="345.5" r="2.1" fill="#f23a1b"/>
<circle cx="431" cy="536" r="2" fill="#f23a1b"/>
<path d="M331.0 238 L340.0 244 M332.5 245 C333.5 241.5 336.0 239.5 339.5 237.5" stroke="#f23a1b" stroke-width="2.7" fill="none"/>
<path d="M358.0 332.5 L367.0 338.5 M359.5 339.5 C360.5 336.0 363.0 334.0 366.5 332.0" stroke="#f23a1b" stroke-width="2.7" fill="none"/>
<path d="M459.0 311.5 L468.0 317.5 M460.5 318.5 C461.5 315.0 464.0 313.0 467.5 311.0" stroke="#f23a1b" stroke-width="2.7" fill="none"/>
<path d="M469.0 372.5 L478.0 378.5 M470.5 379.5 C471.5 376.0 474.0 374.0 477.5 372.0" stroke="#f23a1b" stroke-width="2.7" fill="none"/>
<path d="M294.5 283.8 h7 M294.5 287.8 h7" stroke="#f23a1b" stroke-width="2.4" fill="none"/><text x="302.5" y="291" font-family="Liberation Sans, sans-serif" font-size="7.5" fill="#f23a1b" style="letter-spacing:0;-webkit-text-stroke:0">5</text>
<path d="M523.5 362.8 h7 M523.5 366.8 h7" stroke="#f23a1b" stroke-width="2.4" fill="none"/><text x="531.5" y="370" font-family="Liberation Sans, sans-serif" font-size="7.5" fill="#f23a1b" style="letter-spacing:0;-webkit-text-stroke:0">6</text>
<path d="M411 354.5 h9" stroke="#f23a1b" stroke-width="2"/>
</svg></div>
<div class="abs" style="left:206px;top:615px;width:521px;height:26px;background:#efebe7"></div>
<div class="abs" style="left:205.5px;top:614px;width:110px;height:26px;border:1px solid #d9d3cd;border-top:none;border-radius:0 0 4px 4px;background:#f4f1ee;box-sizing:border-box"></div>
<svg class="ico" style="left:210px;top:619px" width="14" height="14" viewBox="0 0 14 14"><path d="M2 1.5 H7 V3.5 H4 V6 H6.5 V8 H4 V12 H2 Z" fill="#d4222a"/><circle cx="8.5" cy="8.5" r="3.4" fill="#1f3fa8"/><circle cx="8.5" cy="8.5" r="1.3" fill="#f4f1ee"/><path d="M8.5 4 v9 M4 8.5 h9 M5.3 5.3 l6.4 6.4 M11.7 5.3 l-6.4 6.4" stroke="#1f3fa8" stroke-width="1.2"/><circle cx="8.5" cy="8.5" r="1.2" fill="#f4f1ee"/></svg>
<div class="t" style="left:230px;top:620px">Unnamed : 1*</div>
<svg class="ico" style="left:296px;top:622.5px" width="11" height="11" viewBox="0 0 11 11"><circle cx="5.5" cy="5.5" r="4.8" fill="#bdb9b5"/><path d="M3.6 3.6 L7.4 7.4 M7.4 3.6 L3.6 7.4" stroke="#f4f1ee" stroke-width="1.2"/></svg>
<div class="t" style="left:0px;top:648px">Report view</div>
<div class="t" style="left:430px;top:648px">Python console</div>
<svg class="ico" style="left:399px;top:650px" width="10" height="10" viewBox="0 0 10 10"><rect x=".5" y=".5" width="9" height="9" rx="1.5" fill="#f6f4f2" stroke="#6e6a66"/><rect x="2.5" y="4" width="3.5" height="3.5" fill="none" stroke="#6e6a66" stroke-width=".8"/><path d="M4 2.5 H7.5 V6" fill="none" stroke="#6e6a66" stroke-width=".8"/></svg>
<svg class="ico" style="left:412px;top:650px" width="10" height="10" viewBox="0 0 10 10"><rect x=".5" y=".5" width="9" height="9" rx="1.5" fill="#f6f4f2" stroke="#6e6a66"/><path d="M3 3 L7 7 M7 3 L3 7" stroke="#3a3836" stroke-width="1.2"/></svg>
<div class="abs" style="left:0;top:666px;width:408px;height:12px;background:#fff;border:1px solid #d3ccc6;border-left:none;box-sizing:border-box"></div>
<div class="abs" style="left:409px;top:666px;width:15px;height:12px;background:#f6f4f2;border:1px solid #d9d3cd;box-sizing:border-box;border-radius:2px 2px 0 0"></div>
<svg class="ico" style="left:413px;top:669px" width="7" height="4" viewBox="0 0 7 4"><path d="M.5 3.8 L3.5 .8 L6.5 3.8" fill="none" stroke="#444" stroke-width="1.1"/></svg>
<div class="abs" style="left:428px;top:666px;width:299px;height:12px;background:#fff;border:1px solid #d3ccc6;border-right:none;box-sizing:border-box"></div>
<div class="abs" style="left:2px;top:667px;font-family:'Liberation Mono',monospace;font-size:10.5px;letter-spacing:0;-webkit-text-stroke:0;color:#d8c36b;white-space:nowrap;line-height:12px">SparseQR not supported by you current version of Eigen. It</div>
<div class="abs" style="left:457px;top:667.5px;font-family:'Liberation Mono',monospace;font-size:10.5px;letter-spacing:0;-webkit-text-stroke:0;color:#8f8d8b;white-space:nowrap;line-height:12px">FreeCADGui.getDocument(<span style="color:#cf8f8f">"Unnamed"</span>).getObject(</div>
</div>
<svg class="ico" style="left:727px;top:0" width="273" height="672" viewBox="727 0 273 672">
<rect x="727" y="0" width="273" height="672" fill="#fff"/>
<rect x="815" y="101" width="100" height="66" rx="20" ry="20" fill="#d3d3d3" stroke="#111" stroke-width="1.3"/>
<text x="865.0" y="139.8" text-anchor="middle" font-family="Liberation Serif, serif" font-size="24" fill="#111" style="letter-spacing:0;-webkit-text-stroke:0">Pocket</text>
<path d="M865.5 167 V217" stroke="#111" stroke-width="1.3"/>
<path d="M858.5 216 H872.5 L865.5 233.5 Z" fill="#111" stroke="#111" stroke-width="1"/>
<rect x="799" y="234" width="135" height="65" rx="20" ry="20" fill="#d3d3d3" stroke="#111" stroke-width="1.3"/>
<text x="864.5" y="272.3" text-anchor="middle" font-family="Liberation Serif, serif" font-size="24" fill="#111" style="letter-spacing:0;-webkit-text-stroke:0">Sketch001</text>
<path d="M865.5 299 V349" stroke="#111" stroke-width="1.3"/>
<path d="M858.5 348 H872.5 L865.5 365.5 Z" fill="#111" stroke="#111" stroke-width="1"/>
<rect x="815" y="366" width="100" height="66" rx="20" ry="20" fill="#d3d3d3" stroke="#111" stroke-width="1.3"/>
<text x="865.0" y="404.8" text-anchor="middle" font-family="Liberation Serif, serif" font-size="24" fill="#111" style="letter-spacing:0;-webkit-text-stroke:0">Pad</text>
<path d="M865.5 432 V481" stroke="#111" stroke-width="1.3"/>
<path d="M858.5 480 H872.5 L865.5 497.5 Z" fill="#111" stroke="#111" stroke-width="1"/>
<rect x="815" y="498" width="100" height="66" rx="20" ry="20" fill="#d3d3d3" stroke="#111" stroke-width="1.3"/>
<text x="865.0" y="536.8" text-anchor="middle" font-family="Liberation Serif, serif" font-size="24" fill="#111" style="letter-spacing:0;-webkit-text-stroke:0">Sketch</text>
</svg>
</body></html>
